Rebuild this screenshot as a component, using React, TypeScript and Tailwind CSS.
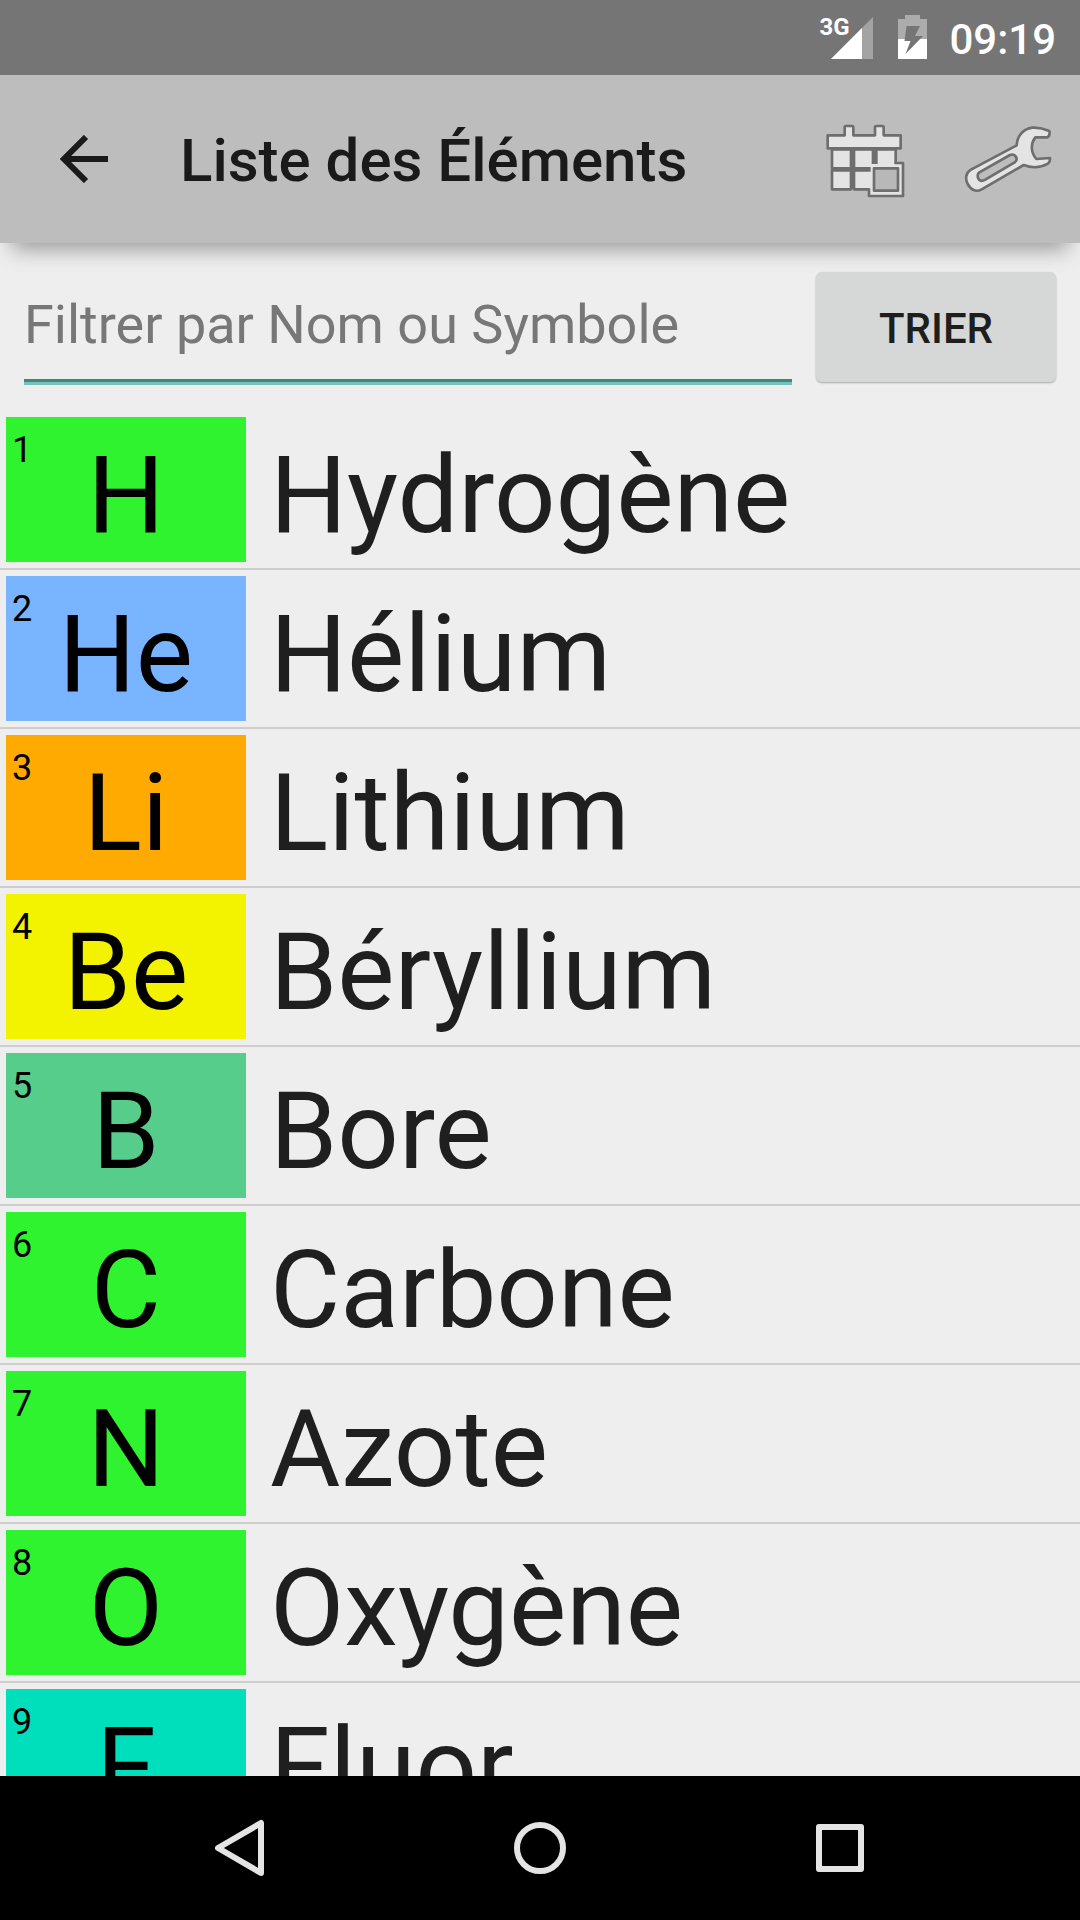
import React from "react";

type ChemicalElement = {
  number: number;
  symbol: string;
  name: string;
  color: string;
};

const elements: ChemicalElement[] = [
  { number: 1, symbol: "H", name: "Hydrogène", color: "bg-[#30f330]" },
  { number: 2, symbol: "He", name: "Hélium", color: "bg-[#78b4ff]" },
  { number: 3, symbol: "Li", name: "Lithium", color: "bg-[#ffaa00]" },
  { number: 4, symbol: "Be", name: "Béryllium", color: "bg-[#f3f300]" },
  { number: 5, symbol: "B", name: "Bore", color: "bg-[#56cd8a]" },
  { number: 6, symbol: "C", name: "Carbone", color: "bg-[#30f330]" },
  { number: 7, symbol: "N", name: "Azote", color: "bg-[#30f330]" },
  { number: 8, symbol: "O", name: "Oxygène", color: "bg-[#30f330]" },
  { number: 9, symbol: "F", name: "Fluor", color: "bg-[#00dfbc]" },
];

function SignalIcon() {
  return (
    <svg viewBox="0 0 42 42" className="h-[42px] w-[42px]" aria-hidden="true">
      <path d="M42 0V42H0Z" fill="#a3a3a3" />
      <path d="M31 11V42H0Z" fill="#fff" />
    </svg>
  );
}

function BatteryIcon() {
  return (
    <svg viewBox="0 0 29 44" className="h-11 w-[29px]" aria-hidden="true">
      <path d="M7 0H22V4H29V24H0V4H7Z" fill="#acacac" />
      <path d="M0 24H29V44H0Z" fill="#fff" />
      <path d="M8.5 11H22L17 21H25L7.5 39L12.5 26H6.5Z" fill="#757575" />
    </svg>
  );
}

function StatusBar() {
  return (
    <div className="flex h-[75px] shrink-0 items-end justify-end bg-[#757575] pr-6 pb-4 text-white">
      <div className="relative mr-[25px]">
        <span className="absolute -top-[3px] -left-3 text-2xl leading-[26px] font-bold">3G</span>
        <SignalIcon />
      </div>
      <BatteryIcon />
      <span className="ml-[22px] text-[42px] leading-[38px] font-medium">09:19</span>
    </div>
  );
}

function TableIcon() {
  return (
    <svg
      viewBox="48 31 288 288"
      className="h-24 w-24"
      fill="#e4e4e4"
      stroke="#6e6e6e"
      strokeWidth="8"
      strokeLinejoin="round"
      aria-hidden="true"
    >
      <path d="M96 146H153V203H96Z" />
      <path d="M162 146H219V203H162Z" />
      <path d="M229 146H287V203H229Z" />
      <path d="M96 209H153V266H96Z" />
      <path d="M162 209H219V266H162Z" />
      <path d="M83 104H134V80Q134 76 138 76H156Q160 76 160 80V104H225V80Q225 76 229 76H247Q251 76 251 80V104H302V143H83Z" />
      <path d="M212 190H310V285H207V262H212Z" stroke="none" />
      <path d="M284 187H309V286H207V263" fill="none" />
      <path d="M222 203H294V270H222Z" fill="#b8b8b8" />
      <path d="M158 205H210M158 148V264M225 148V189" fill="none" />
    </svg>
  );
}

function WrenchIcon() {
  return (
    <svg
      viewBox="480 32 288 288"
      className="h-24 w-24"
      fill="#e4e4e4"
      stroke="#6e6e6e"
      strokeWidth="8"
      strokeLinejoin="round"
      aria-hidden="true"
    >
      <path d="M748 92C730 84 712 81 697 82C668 86 651 108 650 135L513 208C497 217 495 236 503 251C512 268 528 277 545 267L671 194C696 204 724 201 744 190Q751 185 750 173L709 176C691 155 692 129 706 111H742Q751 107 748 92Z" />
      <path
        d="M538 216L630 164C640 159 650 168 650 176Q650 182 644 186L556 238Q541 247 535 235Q530 222 538 216Z"
        fill="#bdbdbd"
      />
    </svg>
  );
}

function AppBar() {
  return (
    <header className="relative z-10 flex h-[168px] shrink-0 items-center bg-[#bdbdbd] text-[#1a1a1a] shadow-[0_18px_20px_-12px_rgba(0,0,0,0.36)]">
      <button type="button" aria-label="Retour" className="flex h-full w-[168px] items-center justify-center">
        <svg viewBox="0 0 48 48" className="size-12" fill="none" stroke="currentColor" strokeWidth="6" aria-hidden="true">
          <path d="M48 24H6M26 2L4 24L26 46" />
        </svg>
      </button>
      <h1 className="ml-3 flex-1 truncate pt-1 text-[60px] leading-[72px] font-medium">Liste des Éléments</h1>
      <button type="button" aria-label="Tableau périodique" className="flex h-full w-36 items-center justify-center">
        <TableIcon />
      </button>
      <button type="button" aria-label="Réglages" className="flex h-full w-36 items-center justify-center">
        <WrenchIcon />
      </button>
    </header>
  );
}

function FilterBar() {
  return (
    <form className="flex shrink-0 items-start gap-6 px-6 pt-7 pb-[29px]">
      <input
        type="text"
        aria-label="Filtrer par Nom ou Symbole"
        placeholder="Filtrer par Nom ou Symbole"
        className="h-[111px] min-w-0 flex-1 border-b-[3px] border-[#3f877e] bg-transparent pb-0.5 text-[54px] leading-[63px] text-[#1f1f1f] shadow-[0_3px_0_#78c1b9] outline-none placeholder:text-[#777777]"
      />
      <button
        type="button"
        className="mt-px h-[110px] w-60 rounded-md bg-[#d6d8d7] pt-0.5 text-[42px] font-medium text-[#1e1e1e] shadow-[0_1px_2px_rgba(0,0,0,0.3)]"
      >
        TRIER
      </button>
    </form>
  );
}

function ElementRow({ element }: { element: ChemicalElement }) {
  return (
    <li className="flex items-stretch border-b-2 border-[#cecece] p-1.5">
      <div className={`relative flex h-[145px] w-60 shrink-0 items-center justify-center pt-2.5 text-black ${element.color}`}>
        <span className="absolute top-3 left-1.5 text-4xl leading-[42px]">{element.number}</span>
        <span className="text-[108px] leading-[126px]">{element.symbol}</span>
      </div>
      <span className="flex items-center pt-2.5 pl-6 text-[108px] leading-[126px] text-[#1f1f1f]">{element.name}</span>
    </li>
  );
}

function NavigationBar() {
  return (
    <nav className="flex h-36 shrink-0 items-center justify-center gap-[204px] bg-black">
      <button type="button" aria-label="Précédent" className="flex size-24 items-center justify-center">
        <svg viewBox="0 0 96 96" className="size-24" fill="none" stroke="#e4e4e4" strokeWidth="6" strokeLinejoin="round" aria-hidden="true">
          <path d="M69 23V73L26 48Z" />
        </svg>
      </button>
      <button type="button" aria-label="Accueil" className="flex size-24 items-center justify-center">
        <svg viewBox="0 0 96 96" className="size-24" fill="none" stroke="#e4e4e4" strokeWidth="6" aria-hidden="true">
          <circle cx="48" cy="48" r="23" />
        </svg>
      </button>
      <button type="button" aria-label="Applications récentes" className="flex size-24 items-center justify-center">
        <svg viewBox="0 0 96 96" className="size-24" fill="none" stroke="#e4e4e4" strokeWidth="6" strokeLinejoin="round" aria-hidden="true">
          <rect x="27" y="27" width="42" height="42" />
        </svg>
      </button>
    </nav>
  );
}

export default function App() {
  return (
    <div className="flex h-screen flex-col overflow-hidden bg-[#eeeeee] font-['Roboto',sans-serif]">
      <StatusBar />
      <AppBar />
      <FilterBar />
      <main className="min-h-0 flex-1 overflow-y-auto [scrollbar-width:none]">
        <ul>
          {elements.map((element) => (
            <ElementRow key={element.number} element={element} />
          ))}
        </ul>
      </main>
      <NavigationBar />
    </div>
  );
}
